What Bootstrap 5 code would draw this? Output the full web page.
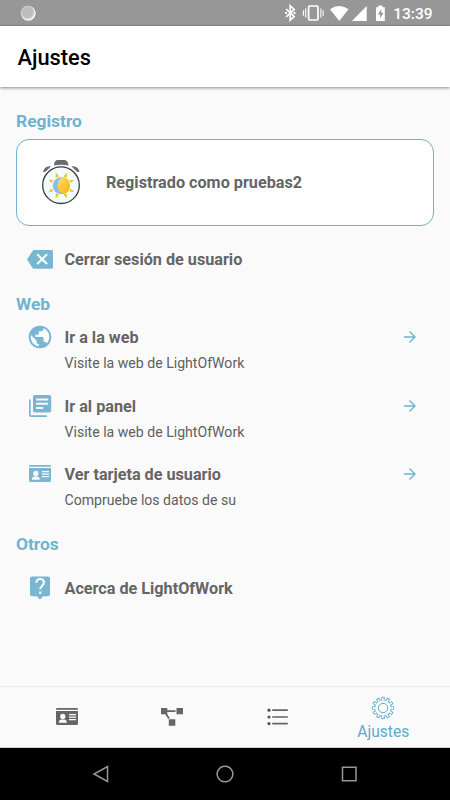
<!DOCTYPE html>
<html lang="es">
<head>
<meta charset="utf-8">
<meta name="viewport" content="width=device-width, initial-scale=1">
<title>Ajustes</title>
<link rel="stylesheet" href="https://cdn.jsdelivr.net/npm/bootstrap@5.3.0/dist/css/bootstrap.min.css">
<style>
:root { --sky: #70b3d0; --ink: #656565; }
body { font-family: Roboto, "Liberation Sans", sans-serif; background: #fafafa; color: var(--ink); }
svg { display: block; flex: none; }
.screen { height: 800px; overflow: hidden; }
.status { height: 26px; background: #979797; color: #fff; border-bottom: 1px solid #8d8d8d; padding-left: 20px; padding-right: 17.5px; }
.clock { font-size: 15.5px; font-weight: 500; line-height: 26px; margin-left: 8px; padding-top: 2px; }
.topbar { height: 61px; background: #fff; color: #000; padding: 0 17.5px; box-shadow: 0 1px 3px rgba(0,0,0,.45); z-index: 1; }
.topbar h1 { font-size: 21.8px; font-weight: 500; line-height: 24px; padding-top: 3px; }
.group-title { font-size: 17.4px; font-weight: 700; color: var(--sky); line-height: 20px; }
.group-first { padding-top: 24px; }
.user-card { height: 87px; border: 1.3px solid var(--sky); border-radius: 13px; padding-left: 23px; background: #fff; margin-top: 8px; }
.label { font-size: 16.2px; font-weight: 700; line-height: 20px; }
.sub { font-size: 14.1px; line-height: 18px; color: #606060; margin-top: 6px; }
.user-card .label { margin-left: 24px; padding-top: 1px; }
.entry { padding-left: 10px; padding-right: 17px; }
.entry-text { padding-top: 5px; }
.entry-arrow { margin-top: 7px; }
.entry-icon { width: 28px; height: 28px; color: #78b6d1; margin-right: 10.5px; }
.entry + .entry { margin-top: 19.5px; }
.gap-top { margin-top: 20px; }
.gap-web { margin-top: 9px; }
.gap-about { margin-top: 21px; }
.gap-group { margin-top: 25px; }
.tabs { height: 62px; border-top: 1px solid #ececec; border-bottom: 1px solid #ccc; padding: 0 14px; color: #666; }
.tab-icon { margin-bottom: 1px; }
.tab-text { font-size: 15.6px; line-height: 19px; color: #5eabcd; margin-top: 3px; margin-bottom: -3px; }
.sysnav { height: 52px; background: #000; color: #979797; }
</style>
</head>
<body>
<svg width="0" height="0" class="position-absolute">
  <defs>
    <symbol id="arrow" viewBox="0 0 14 14"><path d="M1 7h11M6.500 1.500l5.500 5.500-5.500 5.500" fill="none" stroke="#6cb2cf" stroke-width="1.300"/></symbol>
    <symbol id="idcard" viewBox="0 0 22 17">
      <path fill="currentColor" d="M0 1.3Q0 0 1.3 0h19.4Q22 0 22 1.3v.5H0zM0 2.9h22v12.6q0 1.5-1.5 1.5h-19Q0 17 0 15.5z"/>
      <g fill="#fafafa"><circle cx="6.800" cy="8.400" r="2.600"/><path d="M2.800 14.700c0-2.500 1.400-3.200 2.700-3.200h2.600c1.400 0 2.700.7 2.700 3.200zM13 6h7v1.200h-7zM13 8.500h7v1.200h-7zM13 11h7v1.200h-7z"/></g>
    </symbol>
  </defs>
</svg>
<div class="screen d-flex flex-column">
  <div class="status d-flex align-items-center flex-shrink-0">
    <svg width="16" height="16" viewBox="0 0 16 16"><circle cx="8.300" cy="8.300" r="7.400" fill="#f5f5f5"/><circle cx="7.600" cy="7.300" r="6.600" fill="#bebebe"/><circle cx="7.600" cy="7.300" r="6.100" fill="none" stroke="#ddd" stroke-dasharray="1 1.2"/></svg>
    <div class="d-flex align-items-center ms-auto">
      <svg width="101" height="18" viewBox="0 0 101 18">
        <path d="M2.200 5.200l8 7.300-4 3.700V1.800l4 3.700-8 7.300" fill="none" stroke="#fff" stroke-width="1.700"/>
        <path d="M1 8h2v2h-2zM9.500 8h2v2h-2z" fill="#fff"/>
        <g fill="none" stroke="#fff"><rect x="24.600" y="2" width="9.400" height="14" rx="1.200" stroke-width="1.700"/><path d="M21.700 4.500v9M19.400 6.300v5.400M36.900 4.500v9M39.200 6.300v5.400" stroke-width="1.100"/></g>
        <path fill="#fff" d="M46 5.200Q55.200-1.200 64.500 5.200L55.300 17zM82.700 2v15H68z"/>
        <path fill="#fff" fill-rule="evenodd" d="M92 3.200h2.300V1.400h4.200v1.800h2.300V17H92zM97.200 5L94 10.500h2.200v4l3.200-5.700h-2.200z"/>
      </svg>
      <span class="clock">13:39</span>
    </div>
  </div>
  <header class="topbar d-flex align-items-center flex-shrink-0 position-relative"><h1 class="m-0">Ajustes</h1></header>
  <main class="flex-grow-1 px-3">
    <h2 class="group-title group-first mb-0">Registro</h2>
    <div class="user-card d-flex align-items-center">
      <svg width="42" height="48" viewBox="0 0 42 48">
        <path d="M14 6.500q0-5.500 4-5.500h6q4 0 4.500 5.500-7-1.500-14.500 0zM3 13q1-6 8-6l-2 2.500-4 3.500zM39.500 13q-1-6-8-6l2 2.500 4 3.500z" fill="#6c6c6c"/>
        <circle cx="21" cy="26.200" r="18.300" fill="#f2fcff" stroke="#3c3c3c" stroke-width="1.300"/>
        <path d="M16 14.200l2.500 3.200-2.500.8zM26.500 14.200l-2.500 3.200 2.500.8zM9 21.200l3.800.2-1.500 2.200zM33.500 21.200l-3.800.2 1.500 2.200zM9 32.500l3.800-.2-1.500-2.300zM33.500 32.500l-3.800-.2 1.500-2.300zM16 38.800l2.500-3.200-2.500-.8zM26.500 38.800l-2.500-3.200 2.500-.8z" fill="#f8b922" stroke="#f8b922" stroke-width=".6"/>
        <circle cx="21.200" cy="26.700" r="8.500" fill="#8fbcf0"/><ellipse cx="23.800" cy="26.500" rx="6.200" ry="8.200" fill="url(#sun)"/>
        <defs><linearGradient id="sun" x2="1" y2="1"><stop stop-color="#ffe178"/><stop offset="1" stop-color="#f7ae08"/></linearGradient></defs>
      </svg>
      <span class="label">Registrado como pruebas2</span>
    </div>
    <div class="entry gap-top d-flex align-items-center">
      <svg class="entry-icon" viewBox="0 0 28 28"><path fill="currentColor" d="M8.300 4h17.200q1.500 0 1.500 1.500v15.800q0 1.500-1.500 1.500H8.300q-1 0-1.700-.9L1 13.400 6.600 4.900Q7.300 4 8.300 4z"/><path d="M11.200 8.200l9.800 9.800M21 8.200l-9.800 9.800" stroke="#fff" stroke-width="2"/></svg>
      <span class="label">Cerrar sesión de usuario</span>
    </div>
    <h2 class="group-title mb-0 gap-top">Web</h2>
    <div class="entry gap-web d-flex">
      <svg class="entry-icon" viewBox="0 0 24 24"><path fill="currentColor" d="M12 2.300C6.480 2.300 2.300 6.480 2.300 12s4.180 9.700 9.700 9.700 9.700-4.180 9.700-9.700S17.520 2.300 12 2.300zm-1 17.630c-3.950-.49-7-3.850-7-7.930 0-.62.080-1.210.210-1.790L9 15v1c0 1.100.9 2 2 2v1.930zm6.900-2.540c-.26-.81-1-1.390-1.900-1.390h-1v-3c0-.55-.45-1-1-1H8v-2h2c.55 0 1-.45 1-1V7h2c1.100 0 2-.9 2-2v-.41c2.930 1.190 5 4.060 5 7.410 0 2.080-.8 3.970-2.100 5.390z"/></svg>
      <div class="entry-text flex-grow-1"><div class="label">Ir a la web</div><div class="sub">Visite la web de LightOfWork</div></div>
      <svg class="entry-arrow" width="14" height="14"><use href="#arrow"/></svg>
    </div>
    <div class="entry d-flex">
      <svg class="entry-icon" viewBox="0 0 28 28"><path fill="currentColor" d="M7 5q0-2 2-2h14.200q2 0 2 2v13.500q0 2-2 2H9q-2 0-2-2zM3 7.500h1.700v15.800h16V25H5q-2 0-2-2z"/><path d="M10.200 7.500h12M10.200 11.800h12M10.200 16.100h7" stroke="#fafafa" stroke-width="2"/></svg>
      <div class="entry-text flex-grow-1"><div class="label">Ir al panel</div><div class="sub">Visite la web de LightOfWork</div></div>
      <svg class="entry-arrow" width="14" height="14"><use href="#arrow"/></svg>
    </div>
    <div class="entry d-flex">
      <svg class="entry-icon" viewBox="0 0 28 28"><use href="#idcard" x="3" y="5" width="22" height="17"/></svg>
      <div class="entry-text flex-grow-1"><div class="label">Ver tarjeta de usuario</div><div class="sub">Compruebe los datos de su</div></div>
      <svg class="entry-arrow" width="14" height="14"><use href="#arrow"/></svg>
    </div>
    <h2 class="group-title mb-0 gap-group">Otros</h2>
    <div class="entry gap-about d-flex align-items-center">
      <svg class="entry-icon" viewBox="0 0 28 28"><path fill="currentColor" d="M6 1.500h16q2 0 2 2v15.800q0 2-2 2h-4.800L14 24.500l-3.200-3.200H6q-2 0-2-2V3.500q0-2 2-2z"/><path d="M10.300 7.800c0-5.200 7.600-4.800 7.600-.3 0 3-3.700 3.400-3.700 6.800M14.200 16.500v2.400" fill="none" stroke="#fff" stroke-width="2.100"/></svg>
      <span class="label">Acerca de LightOfWork</span>
    </div>
  </main>
  <nav class="tabs d-flex align-items-center flex-shrink-0">
    <div class="col d-flex justify-content-center"><svg class="tab-icon" width="22" height="17"><use href="#idcard"/></svg></div>
    <div class="col d-flex justify-content-center"><svg width="22" height="18" viewBox="0 0 22 18"><path fill="currentColor" d="M0 0h6.300v6.300H0zM15.500 0H22v6.300h-6.500zM7.800 11.300h6.500v6.500H7.800z"/><path d="M6 3.200h8.500M4.500 5l3.500 5.500" stroke="currentColor" stroke-width="1.800"/></svg></div>
    <div class="col d-flex justify-content-center"><svg width="21" height="18" viewBox="0 0 21 18"><g fill="#555"><circle cx="2" cy="2.200" r="1.600"/><circle cx="2" cy="9" r="1.600"/><circle cx="2" cy="15.600" r="1.600"/></g><path d="M5.200 2.200h15.600M5.200 9h15.600M5.200 15.600h15.600" stroke="currentColor" stroke-width="1.700"/></svg></div>
    <div class="col d-flex flex-column align-items-center">
      <svg width="24" height="24" viewBox="-12 -12 24 24" fill="none">
        <g stroke="#5eabcd"><circle r="8.800" fill="#5eabcd" stroke="none"/><circle r="9.500" stroke-width="3.400" pathLength="144" stroke-dasharray="7.600 4.400" transform="rotate(-9.500)"/></g>
        <g stroke="#fafafa"><circle r="7.800" fill="#fafafa" stroke="none"/><circle r="8.700" stroke-width="3.200" pathLength="144" stroke-dasharray="4.200 7.800" transform="rotate(-5.250)"/></g>
        <circle r="4.700" stroke="#5eabcd" stroke-width="1"/>
      </svg>
      <span class="tab-text">Ajustes</span>
    </div>
  </nav>
  <div class="sysnav d-flex align-items-center justify-content-center flex-shrink-0">
    <svg width="266" height="20" viewBox="0 0 266 20" fill="none" stroke="currentColor" stroke-width="1.500"><path d="M15.500 2.500v15L2 10zM133 2.200a7.800 7.800 0 1 0 .01 0zM250.500 3.200h13.500v13.600h-13.500z"/></svg>
  </div>
</div>
<script src="https://cdn.jsdelivr.net/npm/bootstrap@5.3.0/dist/js/bootstrap.bundle.min.js"></script>
</body>
</html>
